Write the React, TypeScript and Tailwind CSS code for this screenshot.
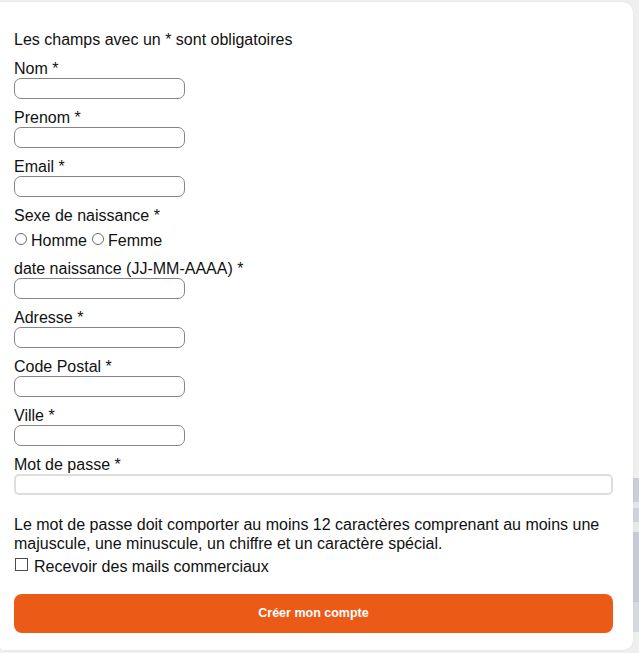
const fields = ['Nom *', 'Prenom *', 'Email *'];
const fields2 = ['Adresse *', 'Code Postal *', 'Ville *'];

function Field({ label }: { label: string }) {
  return (
    <div className="mb-[10px]">
      <div className="h-[18px] leading-[18px]">{label}</div>
      <div className="h-[21px] w-[171px] rounded-[7px] border border-[#858585] bg-white" />
    </div>
  );
}

function Radio({ label }: { label: string }) {
  return (
    <span className="flex items-start">
      <span className="mt-[8px] ml-[1px] mr-[4px] box-border h-[12px] w-[12px] rounded-full border border-[#6b6b6b] bg-white" />
      <span className="mt-[7px] leading-[18px]">{label}</span>
    </span>
  );
}

export default function App() {
  return (
    <div
      className="relative h-[653px] w-[639px] overflow-hidden bg-[#efefef] text-[16px] text-[#111]"
      style={{ fontFamily: '"Liberation Sans", Arial, sans-serif' }}
    >
      {/* page behind the card */}
      <div className="absolute right-0 top-[478px] flex w-[6px] flex-col">
        <div className="h-[24px] bg-[#cbcdd9]" />
        <div className="h-[6px] bg-[#e4e5ec]" />
        <div className="h-[14px] bg-[#cfd1dc]" />
        <div className="h-[10px] bg-[#e8e9ef]" />
        <div className="h-[70px] bg-[#c7c9d6]" />
        <div className="h-[30px] bg-[#d6d8e2]" />
      </div>

      <div className="relative mt-[2px] h-[648px] w-[633px] rounded-bl-[4px] rounded-r-[10px] bg-white pl-[14px] pr-[20px] pt-[29px] shadow-[0_0_2px_rgba(0,0,0,0.08)]">
        <div className="mb-[11px] leading-[18px]">Les champs avec un * sont obligatoires</div>

        {fields.map((f) => (
          <Field key={f} label={f} />
        ))}

        <div className="mb-[10px]">
          <div className="h-[18px] leading-[18px]">Sexe de naissance *</div>
          <div className="flex h-[25px] gap-[4px]">
            <Radio label="Homme" />
            <Radio label="Femme" />
          </div>
        </div>

        <Field label="date naissance (JJ-MM-AAAA) *" />

        {fields2.map((f) => (
          <Field key={f} label={f} />
        ))}

        <div className="mb-[20px]">
          <div className="h-[18px] leading-[18px]">Mot de passe *</div>
          <div className="h-[21px] w-full rounded-[5px] border-2 border-[#dedede] bg-white" />
        </div>

        <p className="leading-[19px]">
          Le mot de passe doit comporter au moins 12 caractères comprenant au moins une majuscule, une minuscule, un
          chiffre et un caractère spécial.
        </p>

        <div className="mt-[5px] flex h-[18px] items-start">
          <span className="ml-[1px] mr-[6px] box-border h-[13px] w-[13px] border border-[#4d4d4d] bg-white" />
          <span className="leading-[18px]">Recevoir des mails commerciaux</span>
        </div>

        <button className="mt-[18px] flex h-[39px] w-full items-center justify-center rounded-[8px] bg-[#ec5a17] text-[12.5px] font-bold text-white">
          Créer mon compte
        </button>
      </div>
    </div>
  );
}
